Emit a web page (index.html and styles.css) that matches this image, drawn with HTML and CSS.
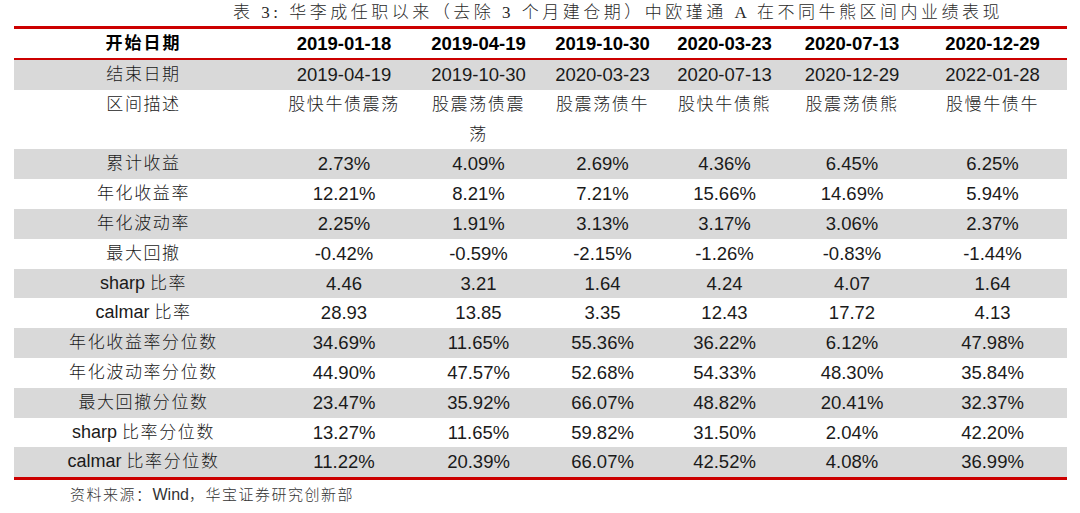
FILE: index.html
```html
<!DOCTYPE html>
<html lang="zh-CN">
<head>
<meta charset="utf-8">
<title>中欧瑾通 A 业绩表现</title>
<link rel="stylesheet" href="styles.css">
</head>
<body>
<div class="page">
  <div class="title">表 3: 华李成任职以来（去除 3 个月建仓期）中欧瑾通 A 在不同牛熊区间内业绩表现</div>
  <table class="perf">
    <colgroup>
      <col class="c0"><col class="c1"><col class="c2"><col class="c3"><col class="c4"><col class="c5"><col class="c6">
    </colgroup>
    <thead>
      <tr><th class="lbl">开始日期</th><th>2019-01-18</th><th>2019-04-19</th><th>2019-10-30</th><th>2020-03-23</th><th>2020-07-13</th><th>2020-12-29</th></tr>
    </thead>
    <tbody>
      <tr><td class="lbl">结束日期</td><td>2019-04-19</td><td>2019-10-30</td><td>2020-03-23</td><td>2020-07-13</td><td>2020-12-29</td><td>2022-01-28</td></tr>
      <tr class="desc"><td class="lbl">区间描述</td><td class="cn">股快牛债震荡</td><td class="cn">股震荡债震<br>荡</td><td class="cn">股震荡债牛</td><td class="cn">股快牛债熊</td><td class="cn">股震荡债熊</td><td class="cn">股慢牛债牛</td></tr>
      <tr><td class="lbl">累计收益</td><td>2.73%</td><td>4.09%</td><td>2.69%</td><td>4.36%</td><td>6.45%</td><td>6.25%</td></tr>
      <tr><td class="lbl">年化收益率</td><td>12.21%</td><td>8.21%</td><td>7.21%</td><td>15.66%</td><td>14.69%</td><td>5.94%</td></tr>
      <tr><td class="lbl">年化波动率</td><td>2.25%</td><td>1.91%</td><td>3.13%</td><td>3.17%</td><td>3.06%</td><td>2.37%</td></tr>
      <tr><td class="lbl">最大回撤</td><td>-0.42%</td><td>-0.59%</td><td>-2.15%</td><td>-1.26%</td><td>-0.83%</td><td>-1.44%</td></tr>
      <tr><td class="lbl"><span class="lat">sharp </span>比率</td><td>4.46</td><td>3.21</td><td>1.64</td><td>4.24</td><td>4.07</td><td>1.64</td></tr>
      <tr><td class="lbl"><span class="lat">calmar </span>比率</td><td>28.93</td><td>13.85</td><td>3.35</td><td>12.43</td><td>17.72</td><td>4.13</td></tr>
      <tr><td class="lbl">年化收益率分位数</td><td>34.69%</td><td>11.65%</td><td>55.36%</td><td>36.22%</td><td>6.12%</td><td>47.98%</td></tr>
      <tr><td class="lbl">年化波动率分位数</td><td>44.90%</td><td>47.57%</td><td>52.68%</td><td>54.33%</td><td>48.30%</td><td>35.84%</td></tr>
      <tr><td class="lbl">最大回撤分位数</td><td>23.47%</td><td>35.92%</td><td>66.07%</td><td>48.82%</td><td>20.41%</td><td>32.37%</td></tr>
      <tr><td class="lbl"><span class="lat">sharp </span>比率分位数</td><td>13.27%</td><td>11.65%</td><td>59.82%</td><td>31.50%</td><td>2.04%</td><td>42.20%</td></tr>
      <tr class="last"><td class="lbl"><span class="lat">calmar </span>比率分位数</td><td>11.22%</td><td>20.39%</td><td>66.07%</td><td>42.52%</td><td>4.08%</td><td>36.99%</td></tr>
    </tbody>
  </table>
  <div class="source">资料来源：<span class="lat">Wind</span>，华宝证券研究创新部</div>
</div>
</body>
</html>
```

FILE: styles.css
```css
html, body {
  margin: 0;
  padding: 0;
  background: #ffffff;
}

.page {
  width: 1080px;
  height: 513px;
  overflow: hidden;
  padding-left: 14px;
  box-sizing: border-box;
  color: #1a1a1a;
}

.title {
  height: 26px;
  line-height: 26px;
  padding-left: 219px;
  font-family: "Liberation Serif", "Noto Sans CJK SC", serif;
  font-size: 17px;
  letter-spacing: 3.5px;
  color: #2a2a2a;
  white-space: nowrap;
  font-weight: 300;
}

.perf {
  width: 1053px;
  table-layout: fixed;
  border-collapse: separate;
  border-spacing: 0;
}

.c0 { width: 259px; }
.c1 { width: 142px; }
.c2 { width: 127px; }
.c3 { width: 121px; }
.c4 { width: 123px; }
.c5 { width: 132px; }
.c6 { width: 149px; }

.perf th,
.perf td {
  padding: 0;
  text-align: center;
  white-space: nowrap;
  font-family: "Liberation Sans", "Noto Sans CJK SC", sans-serif;
  font-size: 18.5px;
  color: #1a1a1a;
}

.perf th {
  line-height: 29px;
  font-weight: bold;
  color: #000;
  border-top: 3px solid #cc0000;
  border-bottom: 2px solid #cc0000;
}

.perf td {
  line-height: 29.8px;
  vertical-align: top;
}

.perf tbody tr:nth-child(odd) td {
  background: #d9d9d9;
}

.perf .lbl,
.perf .cn {
  font-size: 17px;
  letter-spacing: 1.6px;
  font-weight: 300;
}

.perf th.lbl {
  font-weight: bold;
  letter-spacing: 2px;
}

.perf .lat {
  font-family: "Liberation Sans", sans-serif;
  font-size: 18px;
  letter-spacing: 0;
}

.perf tr.last td {
  border-bottom: 3px solid #cc0000;
}

.source {
  margin-top: 5px;
  padding-left: 56px;
  line-height: 20px;
  font-family: "Liberation Sans", "Noto Sans CJK SC", sans-serif;
  font-size: 15px;
  letter-spacing: 1.5px;
  color: #333;
  font-weight: 300;
}

.source .lat {
  letter-spacing: 0;
  font-size: 16px;
}
```
